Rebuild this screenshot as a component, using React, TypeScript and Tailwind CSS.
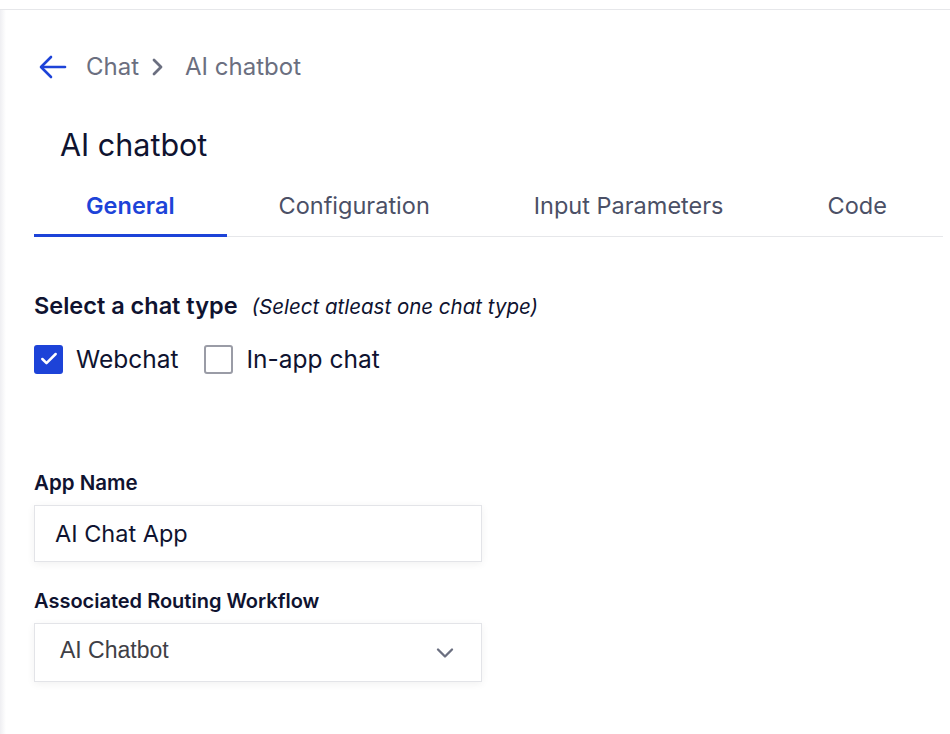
import { ChevronDown } from 'lucide-react'

const tabs = ['General', 'Configuration', 'Input Parameters', 'Code']

const App: React.FC = () => {
  return (
    <div className="flex min-h-[734px] w-[950px] flex-col bg-white font-['Inter',sans-serif] text-[#0f1330]">
      <div className="h-[10px] border-b border-[#e6e7ea]" />
      <div className="flex flex-1">
        <div className="w-[6px] bg-gradient-to-r from-[#efeff2] to-white" />
        <div className="w-[937px] pl-[28px]">
          {/* breadcrumb */}
          <div className="mt-[43px] flex h-[28px] items-center text-[24px] leading-[28px] text-[#6b6f80]">
            <svg width="28" height="24" viewBox="0 0 28 24" className="ml-[5px] text-[#1d43d8]" fill="none" stroke="currentColor" strokeWidth="2.6" strokeLinecap="round" strokeLinejoin="round">
              <path d="M26 12H3" />
              <path d="M12 2 2 12l10 10" />
            </svg>
            <span className="ml-[19px]">Chat</span>
            <svg width="12" height="18" viewBox="0 0 12 18" className="ml-[12px]" fill="none" stroke="currentColor" strokeWidth="2.8" strokeLinecap="round" strokeLinejoin="round">
              <path d="M3 2l7 7-7 7" />
            </svg>
            <span className="ml-[22px]">AI chatbot</span>
          </div>

          <h1 className="mt-[46px] pl-[26px] text-[30.5px] leading-[36px] font-normal">AI chatbot</h1>

          {/* tabs */}
          <div className="mt-[28px] flex border-b border-[#e6e7ea]">
            {tabs.map((t, i) => (
              <div
                key={t}
                className={
                  i === 0
                    ? '-mb-px border-b-[3px] border-[#1d43d8] px-[52px] pb-[13px] text-[23.5px] leading-[30px] font-semibold text-[#1d43d8]'
                    : 'px-[52px] pb-[15px] text-[23.5px] leading-[30px] text-[#4b5066]'
                }
              >
                {t}
              </div>
            ))}
          </div>

          {/* chat type */}
          <div className="mt-[54px] flex items-baseline leading-[30px]">
            <span className="text-[23.5px] font-semibold">Select a chat type</span>
            <span className="ml-[14px] text-[20.5px] italic">(Select atleast one chat type)</span>
          </div>
          <div className="mt-[22px] flex h-[30px] items-center">
            <div className="flex h-[29px] w-[29px] items-center justify-center rounded-[3px] bg-[#1d43d8]">
              <svg width="20" height="20" viewBox="0 0 24 24" fill="none" stroke="white" strokeWidth="3" strokeLinecap="round" strokeLinejoin="round">
                <path d="M20 6 9 17l-5-5" />
              </svg>
            </div>
            <span className="ml-[13px] text-[24.5px] leading-[30px]">Webchat</span>
            <div className="ml-[26px] h-[29px] w-[29px] rounded-[3px] border-2 border-[#9a9ca6]" />
            <span className="ml-[13px] text-[24.5px] leading-[30px]">In-app chat</span>
          </div>

          {/* app name */}
          <div className="mt-[98px] text-[20.5px] font-semibold leading-[22px]">App Name</div>
          <div className="mt-[11px] flex h-[57px] w-[448px] items-center border border-[#e3e4e8] pl-[20px] text-[23.5px] shadow-[0_2px_8px_rgba(0,0,0,0.06)]">
            AI Chat App
          </div>

          <div className="mt-[28px] text-[20px] font-semibold leading-[22px]">Associated Routing Workflow</div>
          <div className="mt-[11px] flex h-[59px] w-[448px] items-center justify-between border border-[#e3e4e8] pr-[22px] pl-[25px] font-['Liberation_Sans',sans-serif] text-[23px] text-[#3f3f46] shadow-[0_2px_8px_rgba(0,0,0,0.06)]">
            <span className="-mt-[4px]">AI Chatbot</span>
            <ChevronDown className="h-[28px] w-[28px] text-[#6b6f80]" strokeWidth={2} />
          </div>
        </div>
      </div>
    </div>
  )
}

export default App
